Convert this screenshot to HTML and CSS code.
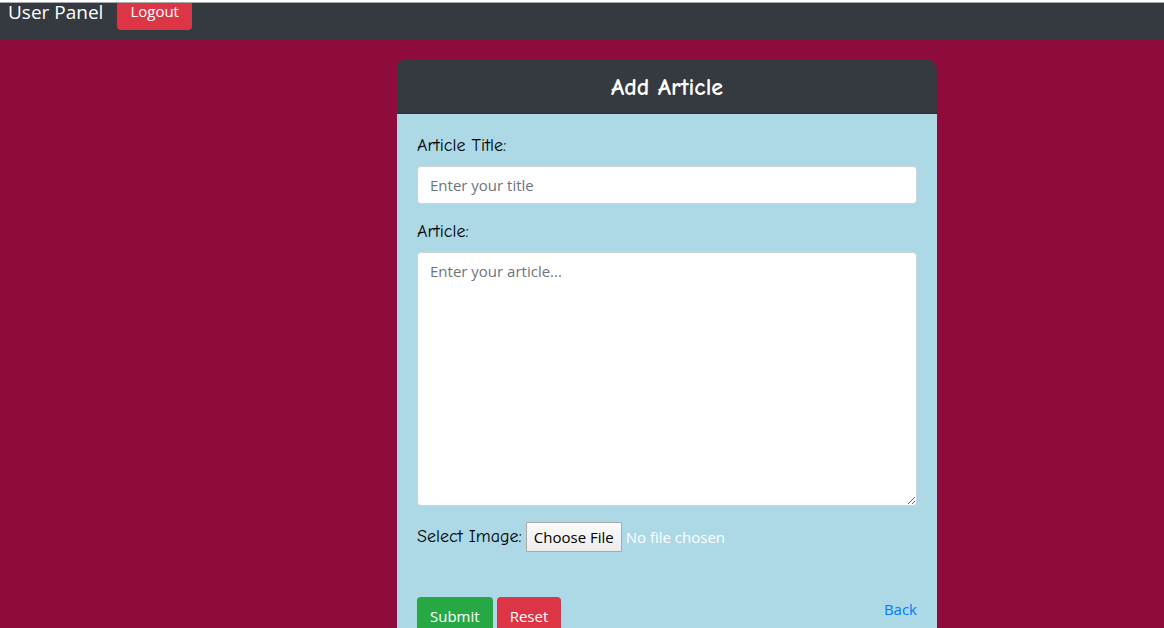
FILE: index.html
```html
<!DOCTYPE html>
<html lang="en">
<head>
  <meta charset="utf-8">
  <title>Add Article</title>
  <link rel="stylesheet" href="styles.css">
</head>
<body>
  <nav class="navbar">
    <a class="brand" href="#">User Panel</a>
    <button class="btn btn-danger" type="button">Logout</button>
  </nav>
  <main class="page">
    <section class="card">
      <h1 class="card-header">Add Article</h1>
      <form class="card-body">
        <div class="form-group">
          <label class="label" for="title">Article Title:</label>
          <input class="control" id="title" type="text" placeholder="Enter your title">
        </div>
        <div class="form-group">
          <label class="label" for="article">Article:</label>
          <textarea class="control article" id="article" placeholder="Enter your article..."></textarea>
        </div>
        <div class="file-row">
          <label class="label" for="image">Select Image:</label>
          <input class="file" id="image" type="file">
        </div>
        <div class="actions">
          <button class="btn btn-success" type="submit">Submit</button>
          <button class="btn btn-danger" type="reset">Reset</button>
          <a class="back" href="#">Back</a>
        </div>
      </form>
    </section>
  </main>
</body>
</html>
```
FILE: styles.css
```css
* {
  box-sizing: border-box;
}

body {
  display: flex;
  flex-direction: column;
  height: 100vh;
  margin: 0;
  overflow: hidden;
  border-top: 2px solid #fff;
  background: #8f0b3b;
  font-family: "Segoe UI", "Open Sans", "Noto Sans", sans-serif;
  font-size: 15px;
  line-height: 24px;
}

.navbar {
  display: flex;
  flex: none;
  align-items: flex-end;
  gap: 14px;
  height: 38px;
  padding: 0 8px 10px;
  overflow: hidden;
  border-top: 1px solid #a9a9ad;
  background: #343a40;
}

.brand {
  padding-bottom: 9px;
  color: #fff;
  font-size: 19px;
  line-height: 18px;
  text-decoration: none;
}

.btn {
  flex: none;
  height: 38px;
  padding: 0 12px;
  border: 1px solid transparent;
  border-radius: 4px;
  color: #fff;
  font: inherit;
}

.btn-danger {
  background: #dc3545;
}

.btn-success {
  background: #28a745;
}

.page {
  display: flex;
  justify-content: center;
  padding: 19px 0 20px 170px;
}

.card {
  flex: 0 1 540px;
}

.card-header {
  margin: 0;
  padding: 13px 20px 11px;
  border-bottom: 1px solid #2c3136;
  border-radius: 10px 10px 0 0;
  background: #343a40;
  color: #fff;
  font-family: "Comic Sans MS", "Comic Neue", cursive;
  font-size: 24px;
  font-weight: 700;
  font-variant-ligatures: none;
  line-height: 30px;
  text-align: center;
}

.card-body {
  padding: 20px;
  border-radius: 0 0 10px 10px;
  background: #add8e6;
}

.form-group {
  display: flex;
  flex-direction: column;
  gap: 8px;
  margin-bottom: 16px;
}

.label {
  color: #000;
  font-family: "Comic Sans MS", "Comic Neue", cursive;
  font-size: 18px;
  font-variant-ligatures: none;
}

.control {
  width: 100%;
  height: 38px;
  padding: 6px 12px;
  border: 1px solid #ced4da;
  border-radius: 4px;
  background: #fff;
  color: #495057;
  font: inherit;
}

.control::placeholder {
  color: #6c757d;
}

.article {
  height: 254px;
  resize: vertical;
}

.file-row {
  display: flex;
  align-items: center;
  gap: 4px;
}

.file {
  flex: 1;
  min-width: 0;
  color: #fff;
  font: inherit;
}

.file::file-selector-button {
  height: 30px;
  margin: 0 4px 0 0;
  padding: 0 7px;
  border: 1px solid #a9a9a9;
  border-radius: 1px;
  background: linear-gradient(#fafafa, #ececec);
  color: #000;
  font: inherit;
}

.actions {
  display: flex;
  align-items: flex-start;
  gap: 4px;
  margin-top: 45px;
}

.back {
  margin-left: auto;
  color: #007bff;
  text-decoration: none;
}
```
